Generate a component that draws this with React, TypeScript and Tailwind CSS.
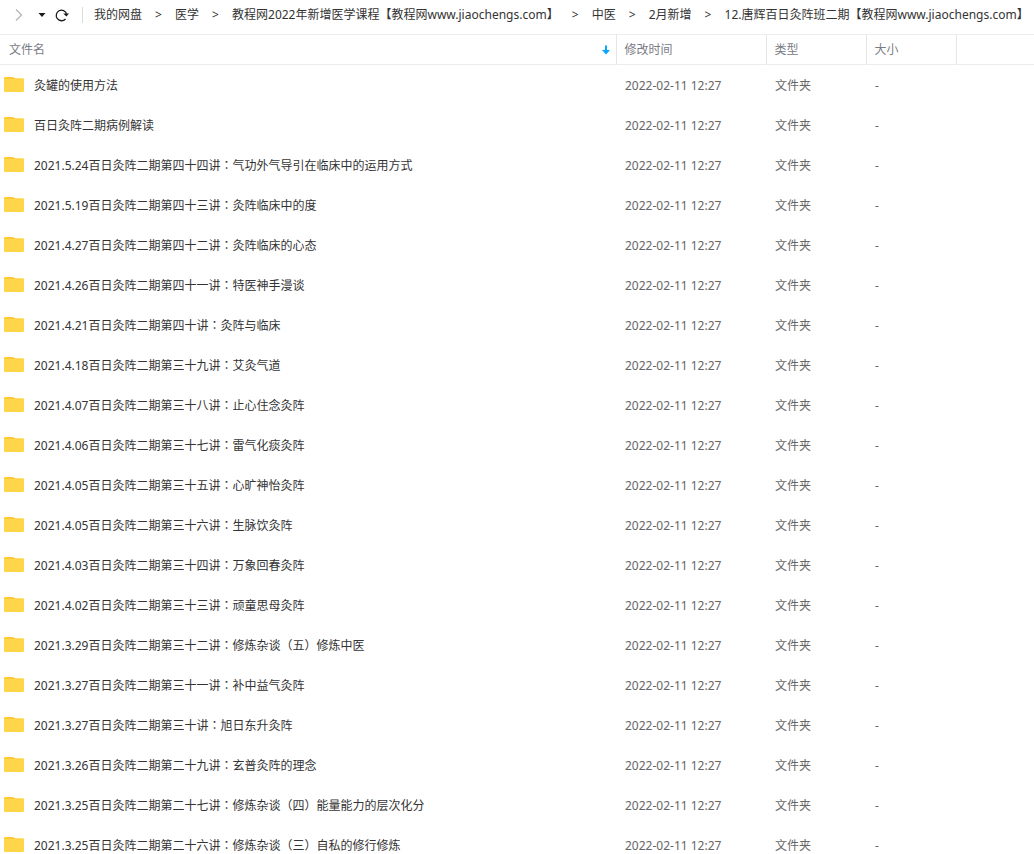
import React from 'react';

type FolderEntry = {
  name: string;
  modified: string;
  type: string;
  size: string;
}

interface FileNameProps {
  text: string;
}

interface FolderRowProps {
  entry: FolderEntry;
}

const path = [
  '我的网盘',
  '医学',
  '教程网2022年新增医学课程【教程网www.jiaochengs.com】',
  '中医',
  '2月新增',
  '12.唐辉百日灸阵班二期【教程网www.jiaochengs.com】',
];

const names = [
  '灸罐的使用方法',
  '百日灸阵二期病例解读',
  '2021.5.24百日灸阵二期第四十四讲：气功外气导引在临床中的运用方式',
  '2021.5.19百日灸阵二期第四十三讲：灸阵临床中的度',
  '2021.4.27百日灸阵二期第四十二讲：灸阵临床的心态',
  '2021.4.26百日灸阵二期第四十一讲：特医神手漫谈',
  '2021.4.21百日灸阵二期第四十讲：灸阵与临床',
  '2021.4.18百日灸阵二期第三十九讲：艾灸气道',
  '2021.4.07百日灸阵二期第三十八讲：止心住念灸阵',
  '2021.4.06百日灸阵二期第三十七讲：雷气化痰灸阵',
  '2021.4.05百日灸阵二期第三十五讲：心旷神怡灸阵',
  '2021.4.05百日灸阵二期第三十六讲：生脉饮灸阵',
  '2021.4.03百日灸阵二期第三十四讲：万象回春灸阵',
  '2021.4.02百日灸阵二期第三十三讲：顽童思母灸阵',
  '2021.3.29百日灸阵二期第三十二讲：修炼杂谈（五）修炼中医',
  '2021.3.27百日灸阵二期第三十一讲：补中益气灸阵',
  '2021.3.27百日灸阵二期第三十讲：旭日东升灸阵',
  '2021.3.26百日灸阵二期第二十九讲：玄普灸阵的理念',
  '2021.3.25百日灸阵二期第二十七讲：修炼杂谈（四）能量能力的层次化分',
  '2021.3.25百日灸阵二期第二十六讲：修炼杂谈（三）自私的修行修炼',
];

const entries: FolderEntry[] = names.map((name) => ({
  name,
  modified: '2022-02-11 12:27',
  type: '文件夹',
  size: '-',
}));

function FolderIcon() {
  return (
      <svg className="h-[17px] w-5 shrink-0" viewBox="0 0 20 17" aria-hidden="true">
        <path d="M0 1.2Q0 0 1.2 0H8.4Q9.4 0 10.2 .7L11.6 1.6H18.8Q20 1.6 20 2.8V8H0Z" fill="#ffc933" />
        <path d="M0 3Q0 2 1 2H9.2Q10 2 10.7 1.8 11.4 1.4 12.2 1.4H18.8Q20 1.4 20 2.6V13.8Q20 15 18.8 15H1.2Q0 15 0 13.8Z" fill="#ffd64a" />
      </svg>
  );
}

// Full-width colons and brackets sit in the middle of their cell
function FileName( { text }: FileNameProps ) {
  return (
      <span className="truncate">
        {text.split(/([：（）])/).map((part, index) => (
            index % 2 === 1
                ? <span key={index} lang="zh-TW" className="font-['Noto_Sans_CJK_TC',sans-serif]">{part}</span>
                : part
        ))}
      </span>
  );
}

function PathBar() {
  return (
      <nav aria-label="路径" className="flex h-[34px] items-center pb-1 text-[#333333]">
        <button type="button" aria-label="前进" className="ml-3 flex w-4 shrink-0 justify-center">
          <svg className="h-3 w-4" viewBox="0 0 16 12" fill="none" stroke="#b4b4b4" strokeWidth="1.2">
            <path d="M4 .5 9.5 6 4 11.5" />
          </svg>
        </button>
        <button type="button" aria-label="历史记录" className="ml-2 flex w-3 shrink-0 justify-center">
          <svg className="h-3 w-3" viewBox="0 0 12 12">
            <path d="M2.5 4H9.5L6 8Z" fill="#1a1a1a" />
          </svg>
        </button>
        <button type="button" aria-label="刷新" className="ml-1.5 flex w-4 shrink-0 justify-center">
          <svg className="h-4 w-4" viewBox="0 0 16 16" fill="none" stroke="#1a1a1a" strokeWidth="1.3">
            <path d="M11.5 12A5.3 5.3 0 1 1 12.6 6.8" />
            <path d="M9.2 6.6H15L12.4 9.6Z" fill="#1a1a1a" stroke="none" />
          </svg>
        </button>
        <span className="ml-3 h-4 w-px shrink-0 bg-[#dcdcdc]" />
        <ol className="ml-[11px] flex items-center whitespace-nowrap">
          {path.map((item, index) => (
              <li key={index} className="flex items-center">
                {index > 0 && <span className="w-[33px] text-center">&gt;</span>}
                <a href="#">{item}</a>
              </li>
          ))}
        </ol>
      </nav>
  );
}

function FolderRow( { entry }: FolderRowProps ) {
  return (
      <tr className="h-10 text-[#666666]">
        <td className="pl-1 pt-0.5">
          <div className="flex items-center gap-[10px] text-[#333333]">
            <FolderIcon />
            <FileName text={entry.name} />
          </div>
        </td>
        <td className="pl-[9px] pt-0.5">{entry.modified}</td>
        <td className="pl-[9px] pt-0.5">{entry.type}</td>
        <td className="pl-[9px] pt-0.5">{entry.size}</td>
        <td />
      </tr>
  );
}

export default function App() {
  return (
      <div lang="zh-CN" className="overflow-x-hidden bg-white font-['Noto_Sans','Noto_Sans_CJK_SC',sans-serif] text-xs">
        <PathBar />
        <table className="w-full table-fixed border-collapse text-left">
          <colgroup>
            <col />
            <col className="w-[150px]" />
            <col className="w-[100px]" />
            <col className="w-[90px]" />
            <col className="w-[78px]" />
          </colgroup>
          <thead>
            <tr className="h-[30px] border-y border-[#ededed] text-[#7a7d85]">
              <th className="border-r border-[#e6e6e6] pl-[9px] pr-1.5 font-normal">
                <button type="button" className="flex w-full items-center justify-between">
                  文件名
                  <svg className="h-3 w-2" viewBox="0 0 8 12" aria-hidden="true">
                    <path d="M3 1.5H5V6H8L4 10.5 0 6H3Z" fill="#06a7ff" />
                  </svg>
                </button>
              </th>
              <th className="border-r border-[#e6e6e6] pl-2 font-normal">修改时间</th>
              <th className="border-r border-[#e6e6e6] pl-2 font-normal">类型</th>
              <th className="border-r border-[#e6e6e6] pl-2 font-normal">大小</th>
              <td />
            </tr>
          </thead>
          <tbody>
            {entries.map((entry) => (
                <FolderRow key={entry.name} entry={entry} />
            ))}
          </tbody>
        </table>
      </div>
  );
}
